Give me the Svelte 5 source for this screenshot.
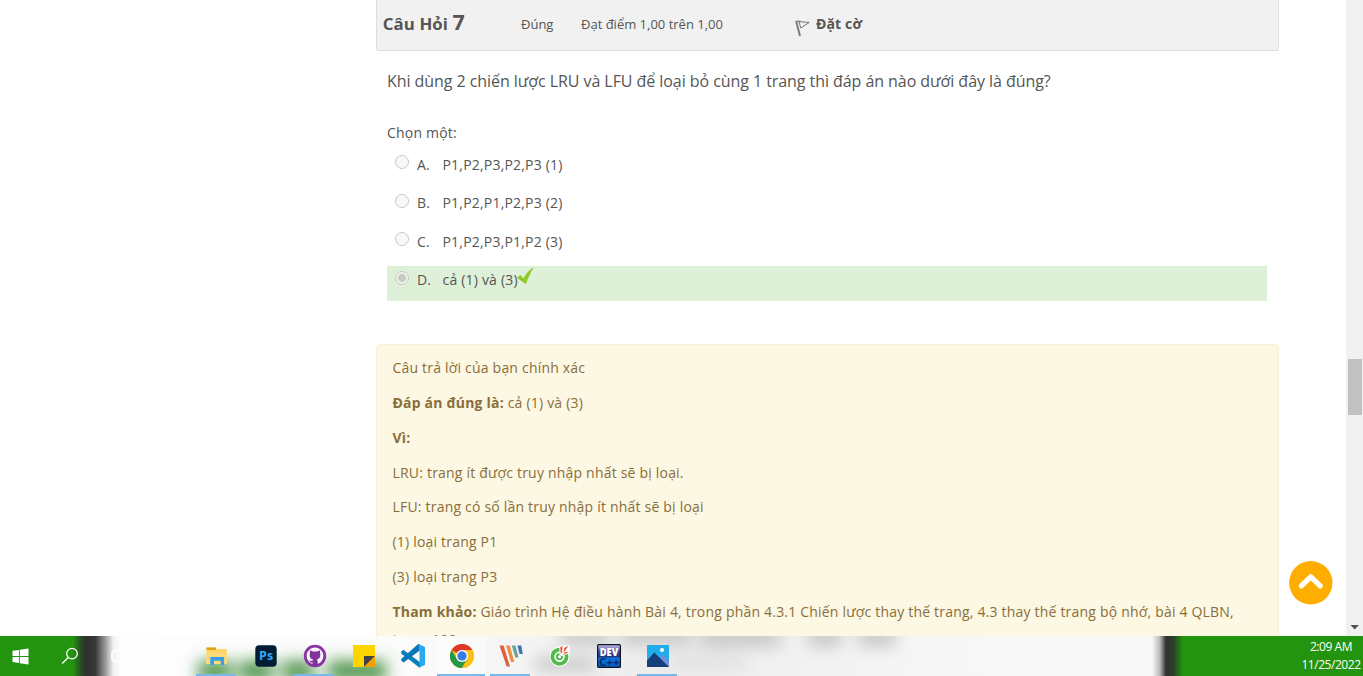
<script>
  const options = [
    { key: 'A.', text: 'P1,P2,P3,P2,P3 (1)' },
    { key: 'B.', text: 'P1,P2,P1,P2,P3 (2)' },
    { key: 'C.', text: 'P1,P2,P3,P1,P2 (3)' },
    { key: 'D.', text: 'cả (1) và (3)', chosen: true }
  ];
  const feedback = [
    { text: 'Câu trả lời của bạn chính xác' },
    { bold: 'Đáp án đúng là:', text: ' cả (1) và (3)' },
    { bold: 'Vì:', text: '' },
    { text: 'LRU: trang ít được truy nhập nhất sẽ bị loại.' },
    { text: 'LFU: trang có số lần truy nhập ít nhất sẽ bị loại' },
    { text: '(1) loại trang P1' },
    { text: '(3) loại trang P3' },
    {
      bold: 'Tham khảo:',
      text: ' Giáo trình Hệ điều hành Bài 4, trong phần 4.3.1 Chiến lược thay thế trang, 4.3 thay thế trang bộ nhớ, bài 4 QLBN, trang 100'
    }
  ];
</script>

<div class="screen">
  <div class="browser">
    <main>
      <header>
        <h3>Câu Hỏi <span>7</span></h3>
        <div class="state">Đúng</div>
        <div class="grade">Đạt điểm 1,00 trên 1,00</div>
        <div class="flag">
          <svg width="16" height="17" viewBox="0 0 16 17" fill="none" stroke="#777">
            <path d="M1.2 1.3 L5 16" stroke-width="1.9" />
            <path d="M3 1.6 L14.3 2.4 L5.8 8 L4 2" stroke-width="1" />
            <path d="M.6 1.2h5" stroke-width="1" />
          </svg>
          <b>Đặt cờ</b>
        </div>
      </header>

      <section class="question">
        <p class="stem">Khi dùng 2 chiến lược LRU và LFU để loại bỏ cùng 1 trang thì đáp án nào dưới đây là đúng?</p>
        <p class="prompt">Chọn một:</p>
        <ul>
          {#each options as o}
            <li class:chosen={o.chosen}>
              <i class="radio"></i>
              <span class="key">{o.key}</span>
              <span>{o.text}</span>
              {#if o.chosen}
                <svg class="tick" width="17" height="18" viewBox="0 0 17 18">
                  <path d="M0 10.3 L3.8 8.2 L6.4 11.4 C8.6 7 12 3.4 17 0 C13.8 5 11.4 10.5 8.8 17 C6 15 3 13.6 0 10.3Z" fill="#8fc926" />
                </svg>
              {/if}
            </li>
          {/each}
        </ul>
      </section>

      <section class="feedback">
        {#each feedback as f}
          <p>{#if f.bold}<b>{f.bold}</b>{/if}{f.text}</p>
        {/each}
      </section>
    </main>

    <aside>
      <div class="to-top">
        <svg width="44" height="44" viewBox="0 0 44 44">
          <circle cx="21.8" cy="21.8" r="21.7" fill="#ffae00" />
          <path d="M12.3 24.9 L21.8 15.8 L31.2 24.9" fill="none" stroke="#fff" stroke-width="5.2" stroke-linecap="round" stroke-linejoin="round" />
        </svg>
      </div>
    </aside>
    <div class="scrollbar">
      <div class="thumb"></div>
      <svg width="9" height="5" viewBox="0 0 9 5"><path d="M.5 0H8.9L4.7 4.6Z" fill="#505050" /></svg>
    </div>
  </div>

  <footer>
    <svg class="glass" width="1363" height="40" viewBox="0 0 1363 40">
      <defs>
        <filter id="soft" x="-10%" y="-100%" width="120%" height="300%"><feGaussianBlur stdDeviation="8" /></filter>
        <linearGradient id="left">
          <stop offset="0" stop-color="#22940f" />
          <stop offset=".6" stop-color="#22940f" />
          <stop offset=".66" stop-color="#2a4f27" />
          <stop offset=".7" stop-color="#303030" />
          <stop offset=".78" stop-color="#363636" />
          <stop offset=".86" stop-color="#969696" />
          <stop offset=".93" stop-color="#f2f2f2" />
          <stop offset="1" stop-color="#fff" />
        </linearGradient>
        <linearGradient id="right">
          <stop offset="0" stop-color="#f9f9f9" />
          <stop offset=".25" stop-color="#bbb" />
          <stop offset=".45" stop-color="#303030" />
          <stop offset=".68" stop-color="#2b3e29" />
          <stop offset="1" stop-color="#22940f" />
        </linearGradient>
        <linearGradient id="base">
          <stop offset="0" stop-color="#fff" />
          <stop offset=".3" stop-color="#fbfbfb" />
          <stop offset=".48" stop-color="#ececec" />
          <stop offset=".7" stop-color="#f7f7f7" />
          <stop offset="1" stop-color="#f9f9f9" />
        </linearGradient>
      </defs>
      <rect width="1363" height="40" fill="url(#base)" />
      <g filter="url(#soft)">
        <g fill="#4d9449">
          <rect x="198" y="25" width="34" height="20" />
          <rect x="239" y="25" width="34" height="20" />
          <rect x="282" y="25" width="32" height="20" />
          <rect x="328" y="25" width="58" height="20" />
        </g>
        <g fill="#c2c3c3">
          <rect x="560" y="-6" width="50" height="14" />
          <rect x="622" y="-6" width="70" height="14" />
          <rect x="700" y="-6" width="80" height="16" />
          <rect x="808" y="-6" width="34" height="16" />
          <rect x="858" y="-6" width="38" height="16" />
          <rect x="535" y="22" width="60" height="12" />
          <rect x="672" y="22" width="75" height="8" opacity=".5" />
        </g>
      </g>
      <rect width="122" height="40" fill="url(#left)" />
      <rect x="1152" width="31" height="40" fill="url(#right)" />
      <rect x="1182" width="181" height="40" fill="#22940f" />
    </svg>

    <nav>
      <div class="app">
        <svg width="17" height="17" viewBox="0 0 17 17" fill="#fff"><path d="M.5 2.8 7 1.9V8H.5zM7.8 1.7 16.5.5V8H7.8zM.5 8.9H7V15L.5 14.1zM7.8 8.9h8.7v7.6L7.8 15.3z" /></svg>
      </div>
      <div class="app">
        <svg width="18" height="18" viewBox="0 0 18 18" fill="none" stroke="#fff" stroke-width="1.3"><circle cx="11" cy="6.6" r="5.3" /><path d="M7.2 10.5 1.2 16.5" /></svg>
      </div>
      <div class="app">
        <svg width="16" height="16" viewBox="0 0 16 16" fill="none" stroke="#fff" stroke-width="2"><circle cx="7" cy="8" r="6.3" /></svg>
      </div>
      <div class="app"></div>
      <div class="app open">
        <svg width="22" height="20" viewBox="0 0 22 20"><path d="M.5 1.5h9l1.3 1.5h10V18H.5z" fill="#ffd667" /><path d="M.5 1.5h9l.7 2.6H.5z" fill="#dda012" /><path d="M.5 7h20.3v11H.5z" fill="#ffda78" /><path d="M4.3 11h13.9v8h-3.5v-4.3H8v4.3H4.3z" fill="#3b9fe8" /></svg>
      </div>
      <div class="app">
        <svg width="22" height="22" viewBox="0 0 22 22"><rect x=".3" y=".3" width="21.4" height="21.4" rx="4" fill="#001d34" /><text x="4.1" y="15.2" font-size="12.5" font-weight="700" font-family="Open Sans, sans-serif" fill="#36a8fb" textLength="14" lengthAdjust="spacingAndGlyphs">Ps</text></svg>
      </div>
      <div class="app open">
        <svg width="24" height="24" viewBox="0 0 24 24"><circle cx="12" cy="12" r="9.8" fill="#f8f3fa" stroke="#8934a2" stroke-width="2.8" /><path d="M7.2 6.3 9.7 7.5h4.6L16.8 6.3 17.3 10.7C17.5 13.7 15.8 15 13.8 15.5L14.7 17.3V22H9.5V18.6C7.4 18.8 6.9 17.6 6.1 16.5L9.3 17 10.1 15.5C7.8 15 6.4 13.5 6.7 10.7Z" fill="#813399" /></svg>
      </div>
      <div class="app">
        <svg width="22" height="22" viewBox="0 0 22 22"><path d="M0 0h22v11L11 22H0z" fill="#ffd500" /><path d="M11 11h11L11 22z" fill="#424242" /><path d="M22 11v11H11z" fill="#efa000" /></svg>
      </div>
      <div class="app">
        <svg width="24" height="24" viewBox="0 0 24 24"><path d="M0 7.8 2.4 5.8 19 18.2V24L.4 9.7z" fill="#087fbd" /><path d="M.2 15 17.2 0 18.7.3V6.6L2.6 18.5.2 16.5z" fill="#0877b8" /><path d="M17.2.1 24 3V21L17.2 24C18.4 23.4 18.5 22.6 18.5 21.6V2.5C18.5 1.4 18.2.6 17.2.1z" fill="#2ba9ee" /></svg>
      </div>
      <div class="app open active">
        <svg width="24" height="24" viewBox="0 0 24 24"><circle cx="12" cy="12" r="12" fill="#fbc116" /><path d="M12 12 1.6 6A12 12 0 0 1 22.4 6H12z" fill="#de382d" /><path d="M1.6 6A12 12 0 0 0 12 24L17.2 15 6.8 15z" fill="#269647" /><path d="M12 6H22.4A12 12 0 0 1 12 24L17.2 15z" fill="#fbc116" /><circle cx="12" cy="12" r="6" fill="#fff" /><circle cx="12" cy="12" r="4.7" fill="#357ee8" /></svg>
      </div>
      <div class="app open">
        <svg width="24" height="24" viewBox="0 0 24 24"><path d="M.5 1.5H4.6L11 22.5H7.7z" fill="#dd6040" /><path d="M7 1.5h3.8L15.3 18H12z" fill="#ef8d40" /><path d="M12.7 1.5h3.8l3 12h-3.2z" fill="#68a597" /><path d="M18.4 1.5h3.9l1.5 8.6h-3.2z" fill="#3c72b8" /></svg>
      </div>
      <div class="app">
        <svg width="22" height="22" viewBox="0 0 22 22"><circle cx="10.6" cy="11.7" r="10" fill="#fff" /><circle cx="10.5" cy="11.7" r="9" fill="#50bb4b" /><circle cx="10.5" cy="11.7" r="5.2" fill="#fff" /><circle cx="10.5" cy="11.7" r="3.6" fill="#55bc4d" /><circle cx="10.5" cy="11.7" r="1.5" fill="#fff" /><path d="M10.5 10V1L20.5 0 21 8 13 11z" fill="#fff" /><path d="M11.2 2.2 13.5 1 13 7.5 11.8 9zM15.5 2.8 19.5.8 14.2 8.4zM16 7.3 20.5 6.4 14 10z" fill="#ee5138" /></svg>
      </div>
      <div class="app">
        <svg width="24" height="24" viewBox="0 0 24 24"><defs><linearGradient id="dev" x2="0" y2="1"><stop offset="0" stop-color="#c9c5ec" /><stop offset=".3" stop-color="#4b4b96" /><stop offset=".52" stop-color="#26347e" /><stop offset=".6" stop-color="#0c74e0" /><stop offset="1" stop-color="#0758bd" /></linearGradient></defs><rect x=".6" y=".6" width="22.8" height="22.8" rx="1" fill="url(#dev)" stroke="#101426" stroke-width="1.2" /><text x="2.7" y="11.6" font-size="10.5" font-weight="800" font-family="Open Sans, sans-serif" fill="#fff" textLength="18.5" lengthAdjust="spacingAndGlyphs">DEV</text><text x="2" y="21.6" font-size="10.5" font-weight="700" font-family="Open Sans, sans-serif" fill="#08285c" textLength="20.5" lengthAdjust="spacingAndGlyphs">C++</text></svg>
      </div>
      <div class="app open">
        <svg width="22" height="22" viewBox="0 0 22 22"><rect width="22" height="22" fill="#23aceb" /><path d="M11 14 16 10 22 16V22H11z" fill="#7590db" /><path d="M0 15.5 7.3 7.5 22 22H0z" fill="#163e79" /><circle cx="15" cy="5" r="2.1" fill="#fff" /></svg>
      </div>
    </nav>
    <div class="clock"><span>2:09 AM</span><span>11/25/2022</span></div>
  </footer>
</div>

<style>
  :global(body) { margin: 0; overflow: hidden; }
  .screen { width: 1363px; height: 676px; display: flex; flex-direction: column; overflow: hidden; background: #fff; color: #555; font: 14px 'Open Sans', sans-serif; }
  p, h3, ul { margin: 0; padding: 0; }
  .browser { height: 636px; display: grid; grid-template-columns: 903px 67px 17px; padding-left: 376px; overflow: hidden; }
  main { height: 636px; overflow: hidden; }
  header { box-sizing: border-box; height: 51px; display: grid; grid-template-columns: 138.2px 60px 214.5px 1fr; padding-left: 5.8px; background: #f1f1f1; border: 1px solid #ddd; border-top: 0; border-radius: 0 0 2px 2px; }
  h3 { font-size: 16.8px; line-height: 43px; height: 43px; white-space: nowrap; letter-spacing: .1px; }
  h3 span { font-size: 21.5px; }
  .state, .grade { font-size: 13px; line-height: 48px; white-space: nowrap; }
  .flag { display: flex; gap: 4.5px; font-size: 14px; line-height: 47px; letter-spacing: .15px; }
  .flag svg { margin-top: 20px; }
  .question { box-sizing: border-box; padding: 19px 12px 0 11px; height: 293px; letter-spacing: .2px; }
  .stem { font-size: 16px; line-height: 22px; white-space: nowrap; letter-spacing: -.062px; }
  .prompt { line-height: 20px; margin-top: 31px; }
  ul { list-style: none; margin-top: 8px; }
  li { box-sizing: border-box; height: 35px; margin-bottom: 3.4px; display: flex; padding-left: 7.5px; line-height: 27px; }
  .chosen { background: #dff0d8; }
  .radio { box-sizing: border-box; flex: none; width: 14px; height: 14px; margin: 4.4px 8.5px 0 0; border: 1px solid #c8c8c8; border-radius: 50%; background: #f8f8f8; }
  .chosen .radio { background: radial-gradient(circle, #c4cbc3 0 3.6px, #eef4ec 4.3px); border-color: #c3c9c1; }
  .key { width: 25.5px; }
  .tick { margin: 1px 0 0 -1px; }
  .feedback { height: 310px; padding: 9px 15px 0 15.5px; background: #fcf8e3; border: 1px solid #fbeed5; border-radius: 4px; color: #8a6d3b; letter-spacing: .2px; }
  .feedback p { line-height: 27.85px; margin-bottom: 7px; }
  aside { display: flex; align-items: flex-end; }
  .to-top { margin: 0 0 31px 10px; height: 44px; }
  .scrollbar { display: flex; flex-direction: column; align-items: center; justify-content: space-between; background: #f1f1f1; padding-bottom: 6px; }
  .thumb { width: 14px; height: 56px; margin-top: 359px; background: #c1c1c1; }
  footer { position: relative; height: 40px; display: flex; justify-content: space-between; }
  .glass { position: absolute; inset: 0; }
  nav { position: relative; display: flex; margin-left: -4px; }
  .app { box-sizing: border-box; width: 49px; height: 40px; display: flex; align-items: center; justify-content: center; }
  .open { background: linear-gradient(#76b9ed, #76b9ed) 4px 38px / 40px 2px no-repeat; }
  .active { background: linear-gradient(#76b9ed, #76b9ed) 0 38px / 48px 2px no-repeat, #ffffff66; }
  .clock { position: relative; display: flex; flex-direction: column; width: 64px; align-items: center; color: #fff; font-size: 12px; line-height: 18px; padding-top: 2px; white-space: nowrap; letter-spacing: -.45px; }
</style>
